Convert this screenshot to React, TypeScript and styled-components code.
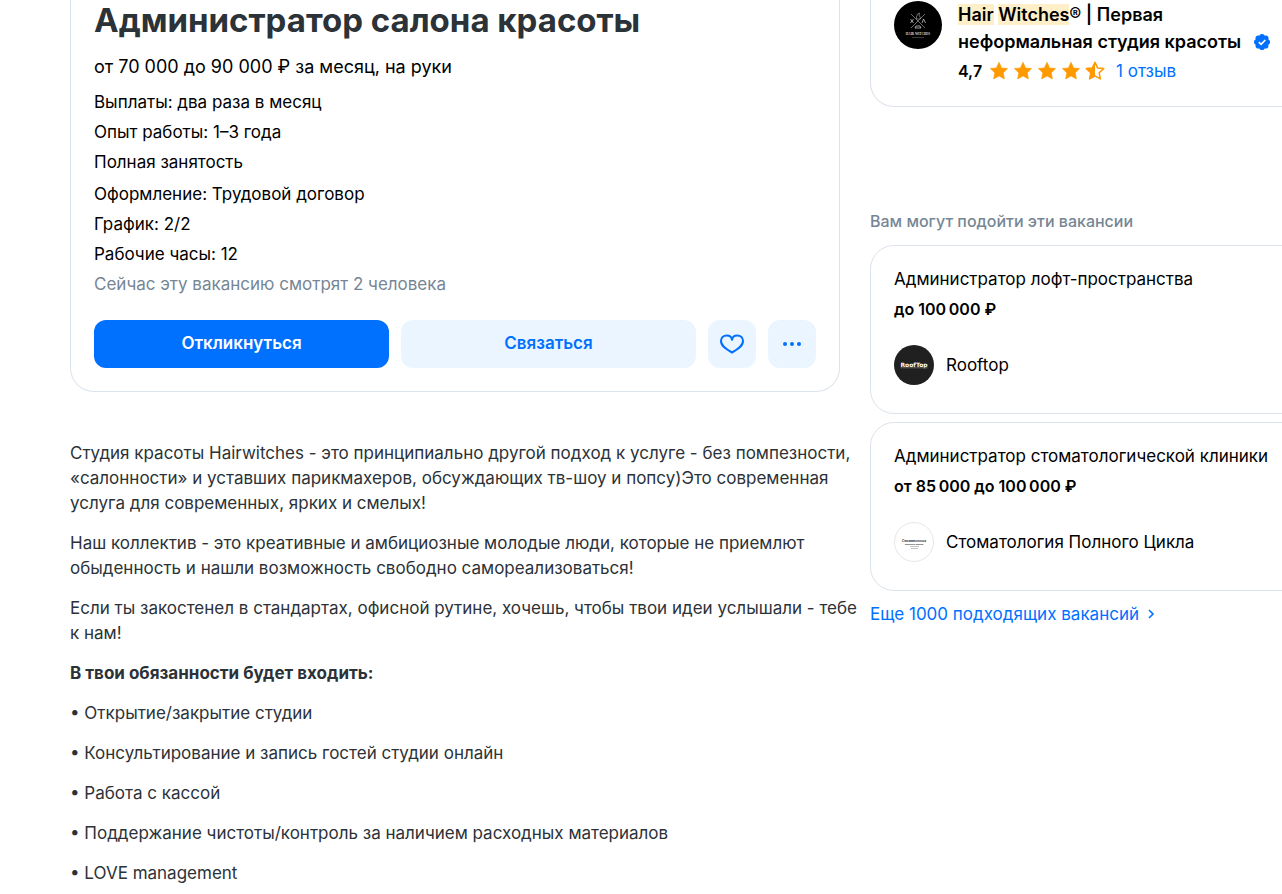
import React from 'react';
import styled, { createGlobalStyle } from 'styled-components';

const GlobalStyle = createGlobalStyle`
  *, *::before, *::after { box-sizing: border-box; }
  body {
    margin: 0;
    background: #fff;
    color: #000;
    font-family: Inter, "Liberation Sans", sans-serif;
    font-size: 17px;
    line-height: 24px;
  }
  h1, h2, h3, p { margin: 0; }
`;

const Page = styled.div`
  overflow: hidden;
`;

const Columns = styled.div`
  display: grid;
  grid-template-columns: minmax(0, 1fr) 440px;
  column-gap: 30px;
  align-items: start;
  padding-left: 70px;
  margin-right: -28px;
`;

const VacancyCard = styled.section`
  padding: 0 23px 23px;
  border: 1px solid #dce3eb;
  border-top: 0;
  border-radius: 0 0 24px 24px;
`;

const Title = styled.h1`
  color: #2b3238;
  font-size: 33px;
  font-weight: 700;
  line-height: 40px;
`;

const Salary = styled.p`
  margin-top: 14px;
  font-size: 18px;
  line-height: 26px;
`;

const Facts = styled.div`
  display: flex;
  flex-direction: column;
  gap: 6px;
  margin-top: 10px;
`;

const Fact = styled.p<{ $muted?: boolean; $spaced?: boolean }>`
  padding-top: ${({ $spaced }) => ($spaced ? 2 : 0)}px;
  color: ${({ $muted }) => ($muted ? '#768694' : '#000')};
`;

const Actions = styled.div`
  display: flex;
  gap: 12px;
  margin-top: 24px;
`;

const Button = styled.button<{ $primary?: boolean; $icon?: boolean }>`
  display: flex;
  align-items: center;
  justify-content: center;
  flex: ${({ $icon }) => ($icon ? '0 0 48px' : '1 1 0')};
  height: 48px;
  padding: ${({ $icon }) => ($icon ? '0' : '0 0 2px')};
  border: 0;
  border-radius: 12px;
  background: ${({ $primary }) => ($primary ? '#0070ff' : '#ebf5ff')};
  color: ${({ $primary }) => ($primary ? '#fff' : '#0070ff')};
  font: 600 17px/24px Inter, "Liberation Sans", sans-serif;
  cursor: pointer;
`;

const Description = styled.article`
  display: flex;
  flex-direction: column;
  gap: 15px;
  margin-right: -18px;
  padding: 49px 0 8px;
  color: #2b3238;
  line-height: 25px;
`;

const EmployerCard = styled.section`
  display: flex;
  gap: 16px;
  padding: 1px 23px 23px;
  border: 1px solid #dce3eb;
  border-top: 0;
  border-radius: 0 0 0 24px;
`;

const EmployerName = styled.h2`
  font-size: 18px;
  font-weight: 600;
  line-height: 27px;

  mark {
    background: #ffefc9;
    color: inherit;
  }

  svg {
    margin-left: 8px;
    vertical-align: -2px;
  }
`;

const Rating = styled.div`
  display: flex;
  align-items: center;
  gap: 7px;
  margin-top: 4px;
`;

const Score = styled.span`
  font-size: 16px;
  font-weight: 600;
`;

const Stars = styled.span`
  display: flex;
  gap: 4px;
  margin-right: 4px;
`;

const Link = styled.a`
  color: #0070ff;
  text-decoration: none;
`;

const SimilarHeading = styled.h2`
  margin: 102px 0 12px;
  color: #768694;
  font-size: 16px;
  font-weight: 500;
  line-height: 24px;
`;

const SimilarList = styled.div`
  display: flex;
  flex-direction: column;
  gap: 8px;
`;

const SimilarCard = styled.article`
  display: flex;
  flex-direction: column;
  gap: 6px;
  padding: 21px 23px 28px;
  border: 1px solid #dce3eb;
  border-radius: 24px;
`;

const SimilarTitle = styled.h3`
  font-size: 17px;
  font-weight: 400;
`;

const SimilarPay = styled.p`
  font-size: 16px;
  font-weight: 600;
`;

const Company = styled.div`
  display: flex;
  align-items: center;
  gap: 12px;
  margin-top: 18px;
`;

const Logo = styled.svg`
  display: block;
  flex: none;
`;

const MoreLink = styled(Link)`
  display: flex;
  align-items: center;
  gap: 8px;
  width: max-content;
  margin-top: 11px;
`;

const STAR = 'M10 1.2l2.6 5.7 6.100.7-4.500 4.200 1.200 6.100L10 14.900l-5.400 3 1.200-6.100-4.500-4.200 6.100-.7z';

const Star = ({ half }: { half?: boolean }) => (
  <svg width="20" height="20" viewBox="0 0 20 20" aria-hidden="true">
    {half ? (
      <>
        <path d={STAR} fill="none" stroke="#ff9900" strokeWidth="1.500" strokeLinejoin="round" />
        <path d="M10 1.200v13.700l-5.400 3 1.200-6.100-4.500-4.200 6.100-.7z" fill="#ff9900" />
      </>
    ) : (
      <path d={STAR} fill="#ff9900" stroke="#ff9900" strokeWidth=".6" strokeLinejoin="round" />
    )}
  </svg>
);

const HeartIcon = () => (
  <svg width="26" height="20" viewBox="0 0 26 20" aria-hidden="true">
    <path
      d="M13 5.8C12.6 3 10.5 1.5 7.8 1.5C4.3 1.5 2 3.8 2 7C2 12 7 15.2 13 18.5C19 15.2 24 12 24 7C24 3.8 21.7 1.5 18.2 1.5C15.5 1.5 13.4 3 13 5.8Z"
      fill="none"
      stroke="#0070ff"
      strokeWidth="2"
      strokeLinejoin="round"
    />
  </svg>
);

const DotsIcon = () => (
  <svg width="18" height="4" viewBox="0 0 18 4" aria-hidden="true">
    <g fill="#0070ff">
      <circle cx="2" cy="2" r="2" />
      <circle cx="9" cy="2" r="2" />
      <circle cx="16" cy="2" r="2" />
    </g>
  </svg>
);

const VerifiedIcon = () => (
  <svg width="16" height="16" viewBox="0 0 16 16" role="img" aria-label="Проверенный работодатель">
    <g fill="#0070ff">
      <circle cx="8" cy="8" r="6.6" />
      <circle cx="8" cy="2.8" r="2.8" />
      <circle cx="11.7" cy="4.3" r="2.8" />
      <circle cx="13.2" cy="8" r="2.8" />
      <circle cx="11.7" cy="11.7" r="2.8" />
      <circle cx="8" cy="13.2" r="2.8" />
      <circle cx="4.3" cy="11.7" r="2.8" />
      <circle cx="2.8" cy="8" r="2.8" />
      <circle cx="4.3" cy="4.3" r="2.8" />
    </g>
    <path d="M4.8 8.2l2.3 2.2 4.2-4.4" fill="none" stroke="#fff" strokeWidth="1.7" />
  </svg>
);

const HairWitchesLogo = () => (
  <Logo width="48" height="48" viewBox="0 0 48 48" aria-hidden="true">
    <circle cx="24" cy="24" r="24" fill="#000" />
    <g fill="none" stroke="#999" strokeWidth=".7">
      <path d="M17 13l14 14M31 13L17 27" />
      <path d="M22.5 16l1-3 2-1-.5 2 1.5 3v1h-4z" />
      <path d="M16.5 18l3 4M19.5 18l-3 4M28 22l1.5-4 2 4M21 27h6l-1-2h-4z" stroke="#ddd" />
    </g>
    <text x="24" y="34" fill="#ddd" fontSize="3.2" fontFamily="Liberation Serif, serif" fontWeight="700" textAnchor="middle">HAIR WITCHES</text>
    <path d="M18 36.5h12" stroke="#555" strokeWidth=".7" />
  </Logo>
);

const RooftopLogo = () => (
  <Logo width="40" height="40" viewBox="0 0 40 40" aria-hidden="true">
    <circle cx="20" cy="20" r="20" fill="#202020" />
    <text x="20" y="21.5" fill="#fff" fontSize="6" fontFamily="DejaVu Sans, sans-serif" fontWeight="700" textAnchor="middle">RoofTop</text>
    <path d="M6.5 22.8h27" stroke="#777" strokeWidth=".8" />
  </Logo>
);

const DentistryLogo = () => (
  <Logo width="40" height="40" viewBox="0 0 40 40" aria-hidden="true">
    <circle cx="20" cy="20" r="19.5" fill="#fff" stroke="#e4e6e9" />
    <g fill="#222" fontFamily="Liberation Sans, sans-serif" textAnchor="middle">
      <text x="20" y="20" fontSize="3" fontStyle="italic" fontWeight="700">Стоматология</text>
      <text x="20" y="22.5" fontSize="2.5" fontWeight="700">полного цикла</text>
    </g>
    <path d="M16 24.5h9M17 26.5h7" stroke="#aaa" strokeWidth=".7" />
  </Logo>
);

const facts = ['Выплаты: два раза в месяц', 'Опыт работы: 1–3 года', 'Полная занятость'];

const duties = [
  'Открытие/закрытие студии',
  'Консультирование и запись гостей студии онлайн',
  'Работа с кассой',
  'Поддержание чистоты/контроль за наличием расходных материалов',
  'LOVE management',
];

const similar = [
  { title: 'Администратор лофт-пространства', pay: 'до 100\u202f000 ₽', company: 'Rooftop', logo: <RooftopLogo /> },
  {
    title: 'Администратор стоматологической клиники',
    pay: 'от 85\u202f000 до 100\u202f000 ₽',
    company: 'Стоматология Полного Цикла',
    logo: <DentistryLogo />,
  },
];

export default function App() {
  return (
    <Page>
      <GlobalStyle />
      <Columns>
        <main>
          <VacancyCard>
            <Title>Администратор салона красоты</Title>
            <Salary>от 70 000 до 90 000 ₽ за месяц, на руки</Salary>
            <Facts>
              {facts.map((fact) => (
                <Fact key={fact}>{fact}</Fact>
              ))}
              <Fact $spaced>Оформление: Трудовой договор</Fact>
              <Fact>График: 2/2</Fact>
              <Fact>Рабочие часы: 12</Fact>
              <Fact $muted>Сейчас эту вакансию смотрят 2 человека</Fact>
            </Facts>
            <Actions>
              <Button type="button" $primary>Откликнуться</Button>
              <Button type="button">Связаться</Button>
              <Button type="button" $icon aria-label="В избранное"><HeartIcon /></Button>
              <Button type="button" $icon aria-label="Ещё"><DotsIcon /></Button>
            </Actions>
          </VacancyCard>
          <Description>
            <p>
              Студия красоты Hairwitches - это принципиально другой подход к услуге - без помпезности,
              «салонности» и уставших парикмахеров, обсуждающих тв-шоу и попсу)Это современная услуга для
              современных, ярких и смелых!
            </p>
            <p>
              Наш коллектив - это креативные и амбициозные молодые люди, которые не приемлют обыденность и
              нашли возможность свободно самореализоваться!
            </p>
            <p>
              Если ты закостенел в стандартах, офисной рутине, хочешь, чтобы твои идеи услышали - тебе к&nbsp;нам!
            </p>
            <p><strong>В твои обязанности будет входить:</strong></p>
            {duties.map((duty) => (
              <p key={duty}>• {duty}</p>
            ))}
          </Description>
        </main>
        <aside>
          <EmployerCard>
            <HairWitchesLogo />
            <div>
              <EmployerName>
                <mark>Hair</mark> <mark>Witches</mark>® | Первая
                <br />
                неформальная студия красоты <VerifiedIcon />
              </EmployerName>
              <Rating>
                <Score>4,7</Score>
                <Stars>
                  <Star />
                  <Star />
                  <Star />
                  <Star />
                  <Star half />
                </Stars>
                <Link href="#reviews">1 отзыв</Link>
              </Rating>
            </div>
          </EmployerCard>
          <SimilarHeading>Вам могут подойти эти вакансии</SimilarHeading>
          <SimilarList>
            {similar.map((item) => (
              <SimilarCard key={item.title}>
                <SimilarTitle>{item.title}</SimilarTitle>
                <SimilarPay>{item.pay}</SimilarPay>
                <Company>
                  {item.logo}
                  <span>{item.company}</span>
                </Company>
              </SimilarCard>
            ))}
          </SimilarList>
          <MoreLink href="#similar">
            Еще 1000 подходящих вакансий
            <svg width="8" height="12" viewBox="0 0 8 12" aria-hidden="true">
              <path d="M2 2l4 4-4 4" fill="none" stroke="#0070ff" strokeWidth="1.6" />
            </svg>
          </MoreLink>
        </aside>
      </Columns>
    </Page>
  );
}
